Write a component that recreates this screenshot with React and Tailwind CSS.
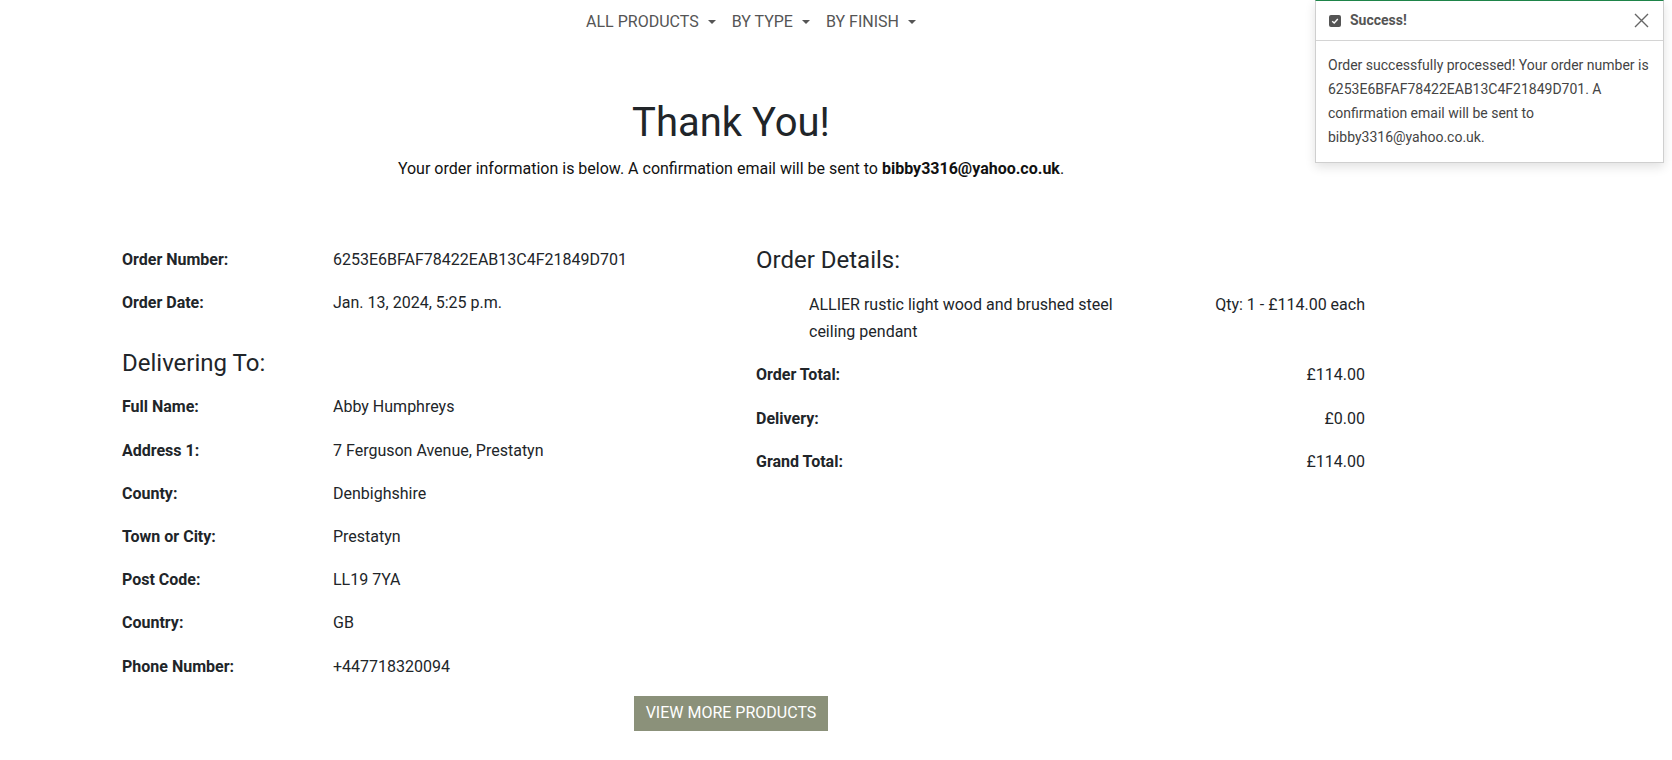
import React from "react";

function Caret() {
  return (
    <span className="ml-[9px] inline-block w-0 h-0 border-x-[4px] border-x-transparent border-t-[4px] border-t-[#555]" />
  );
}

function InfoRow({ label, value }) {
  return (
    <div className="flex mb-4 text-[16px] leading-[27.2px] text-[#212529]">
      <div className="w-[211px] shrink-0 font-bold">{label}</div>
      <div>{value}</div>
    </div>
  );
}

function TotalRow({ label, value }) {
  return (
    <div className="flex justify-between mb-4 text-[16px] leading-[27.2px] text-[#212529]">
      <div className="font-bold">{label}</div>
      <div>{value}</div>
    </div>
  );
}

export default function App() {
  return (
    <div
      className="relative w-[1672px] h-[760px] bg-white overflow-hidden"
      style={{ fontFamily: "Roboto, 'Liberation Sans', sans-serif" }}
    >
      {/* Nav */}
      <nav className="flex justify-center items-center w-[1502px] h-[43px] text-[16px] text-[#555] uppercase">
        {["All Products", "By Type", "By Finish"].map((t) => (
          <div key={t} className="flex items-center px-2">
            <span>{t}</span>
            <Caret />
          </div>
        ))}
      </nav>

      {/* Heading */}
      <div className="w-[1462px] text-center mt-[56px]">
        <h1 className="text-[40px] leading-[48px] font-normal text-[#212529]">Thank You!</h1>
        <p className="mt-[8px] text-[16px] leading-[27.2px] text-[#111]">
          Your order information is below. A confirmation email will be sent to{" "}
          <strong className="font-bold">bibby3316@yahoo.co.uk</strong>.
        </p>
      </div>

      {/* Columns */}
      <div className="mt-[64px] flex pl-[122px] gap-[25px]">
        <div className="w-[609px]">
          <InfoRow label="Order Number:" value="6253E6BFAF78422EAB13C4F21849D701" />
          <InfoRow label="Order Date:" value="Jan. 13, 2024, 5:25 p.m." />
          <h2 className="mt-8 mb-4 text-[24px] leading-[28.8px] font-normal text-[#212529]">Delivering To:</h2>
          <InfoRow label="Full Name:" value="Abby Humphreys" />
          <InfoRow label="Address 1:" value="7 Ferguson Avenue, Prestatyn" />
          <InfoRow label="County:" value="Denbighshire" />
          <InfoRow label="Town or City:" value="Prestatyn" />
          <InfoRow label="Post Code:" value="LL19 7YA" />
          <InfoRow label="Country:" value="GB" />
          <InfoRow label="Phone Number:" value="+447718320094" />
        </div>
        <div className="w-[609px]">
          <h2 className="mb-4 text-[24px] leading-[28.8px] font-normal text-[#212529]">Order Details:</h2>
          <div className="flex mb-4 pl-[53px] text-[16px] leading-[27.2px] text-[#212529]">
            <div className="w-[330px]">ALLIER rustic light wood and brushed steel ceiling pendant</div>
            <div className="ml-auto">Qty: 1 - £114.00 each</div>
          </div>
          <TotalRow label="Order Total:" value="£114.00" />
          <TotalRow label="Delivery:" value="£0.00" />
          <TotalRow label="Grand Total:" value="£114.00" />
        </div>
      </div>

      {/* Button */}
      <div className="w-[1462px] flex justify-center">
        <button className="h-[35px] px-3 bg-[#8b917a] text-white text-[16px] uppercase">
          View More Products
        </button>
      </div>

      {/* Toast */}
      <div className="absolute top-0 left-[1315px] w-[349px] bg-white border border-[#cfcfcf] border-t-[#1e8449] shadow-[0_4px_10px_rgba(0,0,0,0.12)]">
        <div className="flex items-center h-[40px] px-[13px] border-b border-[#d4d4d4]">
          <span className="flex items-center justify-center w-[12px] h-[12px] rounded-[2px] bg-[#555]">
            <svg width="8" height="8" viewBox="0 0 8 8">
              <path d="M1.2 4.2 L3.2 6 L6.8 2" stroke="white" strokeWidth="1.4" fill="none" />
            </svg>
          </span>
          <span className="ml-[9px] text-[14px] font-bold text-[#555]">Success!</span>
          <svg className="ml-auto mr-[1px]" width="15" height="15" viewBox="0 0 15 15">
            <path d="M1 1 L14 14 M14 1 L1 14" stroke="#666" strokeWidth="1.4" fill="none" />
          </svg>
        </div>
        <div className="px-[12px] pt-[12px] pb-[13px] text-[14px] leading-[24px] text-[#444] whitespace-nowrap">
          Order successfully processed! Your order number is
          <br />
          6253E6BFAF78422EAB13C4F21849D701. A
          <br />
          confirmation email will be sent to
          <br />
          bibby3316@yahoo.co.uk.
        </div>
      </div>
    </div>
  );
}
